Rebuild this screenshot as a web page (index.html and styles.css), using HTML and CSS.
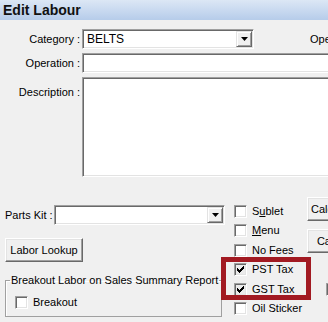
FILE: index.html
```
<!DOCTYPE html>
<html>
<head>
<title>Edit Labour</title>
<link rel="stylesheet" href="styles.css">
</head>
<body>
<div class="titlebar">Edit Labour</div>

<div class="form">
  <div class="row row-category">
    <span class="lbl">Category :</span>
    <div class="field combo cat-combo">BELTS<span class="drop"><svg width="7" height="4" viewBox="0 0 7 4"><polygon points="0,0 7,0 3.5,4" fill="#000"/></svg></span></div>
    <span class="ope">Operator</span>
  </div>
  <div class="row">
    <span class="lbl">Operation :</span>
    <div class="field wide"></div>
  </div>
  <div class="row row-desc">
    <span class="lbl lbl-top">Description :</span>
    <div class="field wide area"></div>
  </div>

  <div class="lower">
    <div class="col-left">
      <div class="parts">
        <span class="parts-lbl">Parts Kit :</span>
        <div class="field combo parts-combo"><span class="drop"><svg width="7" height="4" viewBox="0 0 7 4"><polygon points="0,0 7,0 3.5,4" fill="#000"/></svg></span></div>
      </div>
      <button class="btn lookup">Labor Lookup</button>
      <fieldset class="group">
        <legend>Breakout Labor on Sales Summary Report</legend>
        <div class="check breakout"><span class="box"></span><span>Breakout</span></div>
      </fieldset>
    </div>

    <div class="col-checks">
      <div class="check"><span class="box"></span><span>S<u>u</u>blet</span></div>
      <div class="check"><span class="box"></span><span><u>M</u>enu</span></div>
      <div class="check"><span class="box"></span><span>No Fees</span></div>
      <div class="check"><span class="box checked"><svg width="7" height="7" viewBox="0 0 7 7"><path d="M0 2h1v1h1v1h1V3h1V2h1V1h1V0h1v3h-1v1h-1v1h-1v1h-1v1h-1V6H1V5H0z" fill="#000"/></svg></span><span>PST Tax</span></div>
      <div class="check"><span class="box checked"><svg width="7" height="7" viewBox="0 0 7 7"><path d="M0 2h1v1h1v1h1V3h1V2h1V1h1V0h1v3h-1v1h-1v1h-1v1h-1v1h-1V6H1V5H0z" fill="#000"/></svg></span><span>GST Tax</span></div>
      <div class="check"><span class="box"></span><span>Oil Sticker</span></div>
    </div>

    <div class="col-buttons">
      <button class="btn side">Calculate</button>
      <button class="btn side">Cancel</button>
      <span class="box edge-box"></span>
    </div>

    <div class="highlight"></div>
  </div>
</div>
</body>
</html>
```

FILE: styles.css
```
body {
    margin: 0;
    width: 328px;
    height: 322px;
    overflow: hidden;
    background-color: #f0f0f0;
    font-family: "Liberation Sans", Arial, sans-serif;
    font-size: 11px;
    color: #000;
}

.titlebar {
    height: 20px;
    line-height: 20px;
    padding-left: 3px;
    font-size: 14px;
    font-weight: bold;
    color: #111;
    background: linear-gradient(#dce7f5, #b6ccea);
}

.row {
    display: flex;
    align-items: center;
    margin-top: 4px;
    white-space: nowrap;
}

.row-category {
    margin-top: 9px;
}

.row-desc {
    align-items: flex-start;
}

.lbl {
    flex: none;
    width: 80px;
    margin-right: 2px;
    text-align: right;
    line-height: 13px;
}

.lbl-top {
    padding-top: 9px;
}

.field {
    box-sizing: border-box;
    flex: none;
    height: 20px;
    background-color: #fff;
    border: 1px solid;
    border-color: #a0a0a0 #fff #fff #a0a0a0;
    box-shadow: inset 1px 1px #696969, inset -1px -1px #e3e3e3;
}

.combo {
    display: flex;
    align-items: center;
    padding-left: 4px;
}

.cat-combo {
    width: 172px;
    font-size: 12px;
}

.drop {
    box-sizing: border-box;
    display: flex;
    align-items: center;
    justify-content: center;
    width: 16px;
    height: 16px;
    margin-left: auto;
    margin-right: 1px;
    background-color: #f0f0f0;
    border: 1px solid;
    border-color: #e3e3e3 #696969 #696969 #e3e3e3;
    box-shadow: inset 1px 1px #fff, inset -1px -1px #a0a0a0;
}

.ope {
    margin-left: 56px;
}

.wide {
    width: 300px;
}

.area {
    height: 100px;
}

.lower {
    position: relative;
    display: flex;
}

.col-left {
    flex: none;
    width: 220px;
    margin-left: 5px;
    padding-top: 28px;
}

.parts {
    display: flex;
    align-items: center;
}

.parts-lbl {
    flex: 1;
}

.parts-combo {
    width: 171px;
}

.btn {
    box-sizing: border-box;
    display: block;
    height: 24px;
    padding: 0;
    font-family: "Liberation Sans", Arial, sans-serif;
    font-size: 11px;
    color: #000;
    background-color: #f0f0f0;
    border: 1px solid;
    border-color: #fff #696969 #696969 #fff;
    box-shadow: inset -1px -1px #a0a0a0, inset 1px 1px #e3e3e3;
}

.lookup {
    width: 78px;
    margin-top: 13px;
}

.group {
    box-sizing: border-box;
    width: 217px;
    height: 43px;
    margin: 12px 0 0 0;
    padding: 0 0 0 4px;
    border: 1px solid #a0a0a0;
    box-shadow: inset 1px 1px #fff;
}

.group legend {
    padding: 0 1px;
    line-height: 13px;
}

.check {
    display: flex;
    align-items: flex-start;
    height: 19.4px;
    line-height: 13px;
    white-space: nowrap;
}

.box {
    box-sizing: border-box;
    display: flex;
    align-items: center;
    justify-content: center;
    flex: none;
    width: 13px;
    height: 13px;
    margin-right: 5px;
    background-color: #fff;
    border: 1px solid;
    border-color: #a0a0a0 #fff #fff #a0a0a0;
    box-shadow: inset 1px 1px #696969, inset -1px -1px #e3e3e3;
}

.box.checked {
    background-color: #ebebeb;
}

.breakout {
    margin: 9px 0 0 5px;
}

.col-checks {
    flex: none;
    width: 73px;
    margin-left: 9px;
    padding-top: 28px;
}

.col-buttons {
    flex: none;
    padding-top: 20px;
}

.side {
    width: 54px;
    margin-bottom: 8px;
}

.edge-box {
    margin: 30px 0 0 19px;
}

.highlight {
    position: absolute;
    left: 221px;
    top: 80px;
    width: 80px;
    height: 33px;
    border: 5px solid #a21a22;
}
```
